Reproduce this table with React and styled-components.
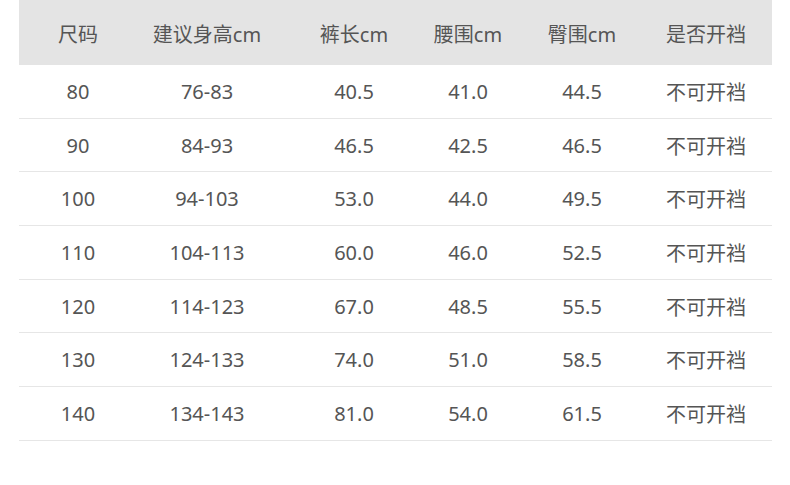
import React from 'react';
import styled, { createGlobalStyle } from 'styled-components';

const GlobalStyle = createGlobalStyle`
  html, body {
    margin: 0;
    padding: 0;
    background: #fff;
  }
  body {
    font-family: "Noto Sans", "Noto Sans CJK SC", sans-serif;
  }
`;

const Page = styled.div`
  width: 790px;
  height: 485px;
  padding: 0 18px 0 19px;
  box-sizing: border-box;
  background: #fff;
`;

const Table = styled.div`
  display: grid;
  grid-template-columns: 118px 140px 154px 74px 154px 94px 19px;
  grid-auto-rows: 53.7px;
  grid-template-rows: 65px;
  color: #555;
  font-size: 20px;
`;

const Cell = styled.div`
  display: flex;
  align-items: center;
  justify-content: center;
  white-space: nowrap;
  background: ${props => (props.head ? '#e4e4e4' : '#fff')};
  border-bottom: ${props => (props.head ? 'none' : '1px solid #e6e6e6')};
  box-sizing: border-box;
  padding-top: ${props => (props.head ? '1px' : '0')};
`;

const headers = ['尺码', '建议身高cm', '裤长cm', '腰围cm', '臀围cm', '是否开裆'];

const rows = [
  ['80', '76-83', '40.5', '41.0', '44.5', '不可开裆'],
  ['90', '84-93', '46.5', '42.5', '46.5', '不可开裆'],
  ['100', '94-103', '53.0', '44.0', '49.5', '不可开裆'],
  ['110', '104-113', '60.0', '46.0', '52.5', '不可开裆'],
  ['120', '114-123', '67.0', '48.5', '55.5', '不可开裆'],
  ['130', '124-133', '74.0', '51.0', '58.5', '不可开裆'],
  ['140', '134-143', '81.0', '54.0', '61.5', '不可开裆'],
];

export default function App() {
  return (
    <Page>
      <GlobalStyle />
      <Table>
        {headers.map(h => (
          <Cell head key={h}>{h}</Cell>
        ))}
        <Cell head />
        {rows.map(row => (
          <React.Fragment key={row[0]}>
            {row.map((v, i) => (
              <Cell key={i}>{v}</Cell>
            ))}
            <Cell />
          </React.Fragment>
        ))}
      </Table>
    </Page>
  );
}
